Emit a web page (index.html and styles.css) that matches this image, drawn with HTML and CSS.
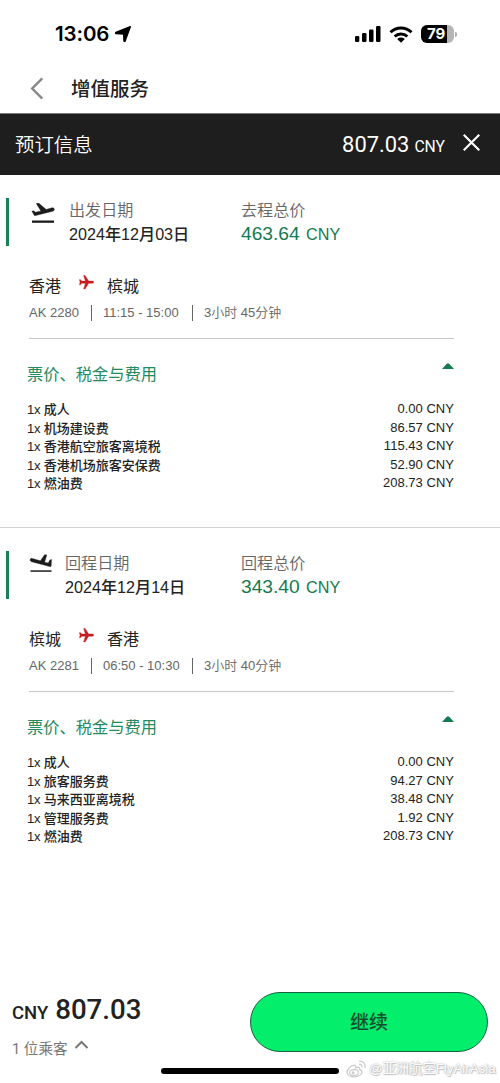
FILE: index.html
```html
<!DOCTYPE html>
<html lang="zh-CN">
<head>
<meta charset="utf-8">
<title>增值服务</title>
<link rel="stylesheet" href="styles.css">
</head>
<body>
<svg class="defs" width="0" height="0">
  <symbol id="plane" viewBox="0 0 24 24"><path d="M21 16v-2l-8-5V3.500c0-.83-.67-1.500-1.500-1.500S10 2.670 10 3.500V9l-8 5v2l8-2.500V19l-2 1.500V22l3.500-1 3.500 1v-1.500L13 19v-5.500l8 2.500z"/></symbol>
</svg>
<div class="screen">
  <div class="status">
    <span class="time">13:06</span>
    <svg class="locate" viewBox="0 0 16 16"><path d="M15.300.7 10 15.200q-.6.700-1-.2L8.600 8 1 7.500q-1-.3-.1-1z" stroke="#000" stroke-width="1.400" stroke-linejoin="round"/></svg>
    <svg class="signal" viewBox="0 0 26 16"><rect y="10" width="4.300" height="6" rx="1.200"/><rect x="7" y="7" width="4.500" height="9" rx="1.200"/><rect x="14" y="3.500" width="4.500" height="12.500" rx="1.200"/><rect x="21" width="4.500" height="16" rx="1.200"/></svg>
    <svg class="wifi" viewBox="0 0 24 17"><g fill="none" stroke="#000" stroke-width="3"><path d="M1.500 6.300a15 15 0 0 1 21 0"/><path d="M5.700 10.500a9 9 0 0 1 12.600 0"/></g><path d="M8.200 13a5.600 5.600 0 0 1 7.600 0L12 16.800z"/></svg>
    <span class="battery">79</span><i class="battery-tip"></i>
  </div>
  <div class="nav">
    <svg class="back" viewBox="0 0 14 24"><path d="M12.500 1.500 2 12l10.500 10.500"/></svg>
    <h1>增值服务</h1>
  </div>
  <div class="summary">
    <span class="summary-title">预订信息</span>
    <span class="summary-total">807.03</span><span class="summary-unit">CNY</span>
    <svg class="close" viewBox="0 0 16 16"><path d="m.7.7 14.600 14.600M15.300.7.7 15.300"/></svg>
  </div>

  <section class="flight">
    <div class="heading">
      <svg class="trip" viewBox="0 0 24 22"><path d="M1 17.500h22v2.300H1z"/><path d="M23.300 6.100c-.3-1-1.300-1.500-2.200-1.300l-5.900 1.600L7.500 0 5.300.6l4.600 7.300-5.300 1.400-2.100-1.600-1.600.5 2.700 4.600 18.200-4.600c1.100-.3 1.700-1.200 1.500-2.100z" stroke="#1c1c1c" stroke-width=".4"/></svg>
      <div class="date"><p class="label">出发日期</p><p class="value">2024年12月03日</p></div>
      <div class="fare"><p class="label">去程总价</p><p class="price">463.64 <small>CNY</small></p></div>
    </div>
    <div class="route"><span>香港</span><svg viewBox="0 0 24 24"><use href="#plane"/></svg><span>槟城</span></div>
    <div class="info"><span class="code">AK 2280</span><span class="hours">11:15 - 15:00</span><span class="length">3小时 45分钟</span></div>
    <div class="fees">
      <div class="fees-head"><h2>票价、税金与费用</h2><svg viewBox="0 0 12 6"><path d="M0 6 4.800.8q1.200-1.200 2.400 0L12 6z"/></svg></div>
      <ul>
        <li><span><i>1x</i> 成人</span><b>0.00 CNY</b></li>
        <li><span><i>1x</i> 机场建设费</span><b>86.57 CNY</b></li>
        <li><span><i>1x</i> 香港航空旅客离境税</span><b>115.43 CNY</b></li>
        <li><span><i>1x</i> 香港机场旅客安保费</span><b>52.90 CNY</b></li>
        <li><span><i>1x</i> 燃油费</span><b>208.73 CNY</b></li>
      </ul>
    </div>
  </section>

  <section class="flight return">
    <div class="heading">
      <svg class="trip" viewBox="0 0 24 22"><path d="M1.500 16.300h21v1.500h-21z"/><path d="M1.200 5.300c.3-.9 1.200-1.100 2-.9l8.200 2.400L15.600.8l2.200.1-2.200 7.300 3.700.8 1.500-2.900 1.700-.6-.3 6.300q-.1 1-1.300.8L2.500 7.700c-1-.3-1.600-1.500-1.300-2.400z" stroke="#1c1c1c" stroke-width=".4"/></svg>
      <div class="date"><p class="label">回程日期</p><p class="value">2024年12月14日</p></div>
      <div class="fare"><p class="label">回程总价</p><p class="price">343.40 <small>CNY</small></p></div>
    </div>
    <div class="route"><span>槟城</span><svg viewBox="0 0 24 24"><use href="#plane"/></svg><span>香港</span></div>
    <div class="info"><span class="code">AK 2281</span><span class="hours">06:50 - 10:30</span><span class="length">3小时 40分钟</span></div>
    <div class="fees">
      <div class="fees-head"><h2>票价、税金与费用</h2><svg viewBox="0 0 12 6"><path d="M0 6 4.800.8q1.200-1.200 2.400 0L12 6z"/></svg></div>
      <ul>
        <li><span><i>1x</i> 成人</span><b>0.00 CNY</b></li>
        <li><span><i>1x</i> 旅客服务费</span><b>94.27 CNY</b></li>
        <li><span><i>1x</i> 马来西亚离境税</span><b>38.48 CNY</b></li>
        <li><span><i>1x</i> 管理服务费</span><b>1.92 CNY</b></li>
        <li><span><i>1x</i> 燃油费</span><b>208.73 CNY</b></li>
      </ul>
    </div>
  </section>

  <footer>
    <div class="checkout">
      <div class="total">
        <p class="sum"><small>CNY</small> 807.03</p>
        <p class="guests">1 位乘客<svg viewBox="0 0 14 9"><path d="m1 8 6-6 6 6"/></svg></p>
      </div>
      <button>继续</button>
    </div>
    <div class="bottom">
      <i class="home"></i>
      <svg class="weibo" viewBox="0 0 20 18"><g fill="none" stroke="#cecece" stroke-width="1.300"><path d="M8 5.200C5 5.500 1 9.500 1 12.300c0 2.800 3.300 4.500 7.300 4.500 4.500 0 7.700-2.500 7.700-4.800 0-1.600-1.300-2.200-2.500-2.500.7-2.300-.8-2.900-4-1.700.5-1.700.2-2.700-1.500-2.600z"/><ellipse cx="8" cy="12.500" rx="4.500" ry="3"/><path d="M13 4.300c2-.3 3.500 1.200 3 3.200M13 1.200c4-.5 6.800 2.600 6 6.600"/></g><circle cx="7.200" cy="12.800" r="1.500" fill="#cecece"/></svg>
      <span class="credit">@亚洲航空FlyAirAsia</span>
    </div>
  </footer>
</div>
</body>
</html>
```

FILE: styles.css
```css
* { box-sizing: border-box; margin: 0; padding: 0; }
body { background: #fff; color: #222; font-family: "Liberation Sans", "Noto Sans CJK SC", sans-serif; }
i, b { font-style: normal; font-weight: 400; }
svg { display: block; flex: none; }
.defs { display: none; }
.screen { display: flex; flex-direction: column; width: 500px; height: 1083px; overflow: hidden; white-space: nowrap; }

.status { display: flex; align-items: center; height: 65px; padding: 3px 43px 0 55px; }
.time { width: 55px; font: 600 20.500px/24px Inter, sans-serif; letter-spacing: -.1px; color: #000; }
.locate { width: 16px; height: 16px; margin-left: 5px; }
.signal { width: 26px; height: 16px; margin-left: auto; }
.wifi { width: 24px; height: 17px; margin-left: 8px; }
.battery { width: 33px; height: 18px; margin-left: 8px; padding-left: 6px; border-radius: 6px; background: linear-gradient(90deg, #000 79%, #b5b5b5 79%); color: #fff; font: 700 15px/18px Inter, sans-serif; letter-spacing: -.2px; }
.battery-tip { width: 2px; height: 5px; margin-left: 1px; border-radius: 0 2px 2px 0; background: #aaa; }

.nav { display: flex; align-items: center; height: 48px; padding: 0 0 2px 30px; }
.back { width: 14px; height: 23px; margin-right: 27px; fill: none; stroke: #888; stroke-width: 2.500; }
h1 { padding-top: 1px; font-size: 19.500px; font-weight: 500; line-height: 28px; }
.summary { display: flex; align-items: center; height: 62px; padding: 0 20px 0 15px; background: #1e1e1e; border-top: 1px solid #777; color: #fff; }
.summary-title { flex: 1; padding-top: 1px; font-size: 19.400px; font-weight: 350; line-height: 28px; }
.summary-total { font: 400 21.900px/26px Roboto, sans-serif; }
.summary-unit { margin: 4px 18px 0 5px; font: 400 15.700px/20px Roboto, sans-serif; }
.close { width: 17px; height: 17px; margin-bottom: 4px; fill: none; stroke: #fff; stroke-width: 2; }

.flight { height: 353px; padding: 23px 46px 0 6px; border-bottom: 1px solid #d2d2d2; }
.return { border-bottom: 0; }
.heading { display: flex; height: 48px; border-left: 3px solid #168153; }
.trip { width: 24px; height: 22px; margin: 5px 0 0 22px; fill: #1c1c1c; }
.date { width: 172px; margin-left: 14px; }
.return .trip { margin-left: 20px; margin-top: 3px; }
.return .date { width: 176px; margin-left: 12px; }
.label { font-size: 16.100px; line-height: 25px; font-weight: 350; color: #666; }
.value { font-size: 16.150px; line-height: 22px; font-weight: 500; color: #222; }
.price { color: #147a50; font-size: 19.200px; line-height: 22px; }
.price small { margin-left: 1px; font-size: 16.200px; }
.route { display: flex; align-items: center; height: 28px; margin: 25px 0 0 23px; font-size: 16px; }
.route svg { width: 17px; height: 17px; margin: 0 12px 6px 17px; fill: #c51d20; stroke: #c51d20; stroke-width: .6; transform: rotate(90deg); }
.info { display: flex; align-items: center; height: 16px; margin: 5px 0 0 23px; padding-top: 1px; color: #666; font-size: 13px; line-height: 16px; font-weight: 350; }
.code { width: 62px; }
.hours { width: 101px; padding-left: 11px; border-left: 1px solid #666; }
.length { padding-left: 11px; border-left: 1px solid #666; }
.fees { margin: 18px 0 0 23px; border-top: 1px solid #c8c8c8; }
.fees-head { display: flex; justify-content: space-between; height: 61px; padding-top: 23px; }
h2 { margin-left: -2px; color: #238a62; font-size: 16.250px; line-height: 24px; font-weight: 400; }
.fees-head svg { width: 12px; height: 6px; margin-top: 1px; fill: #147a50; }
ul { list-style: none; }
li { display: flex; justify-content: space-between; height: 18.600px; margin-left: -2px; font-size: 13px; line-height: 19px; font-weight: 500; }
li b { margin-top: -1px; letter-spacing: .03px; }
li span i { letter-spacing: -.3px; }

footer { margin-top: auto; height: 91px; }
.checkout { display: flex; justify-content: space-between; height: 60px; padding: 0 12px; }
.sum { margin-top: 2px; font: 500 27.700px/32px Roboto, sans-serif; color: #222; }
.sum small { font-size: 18.500px; }
.guests { display: flex; margin-top: 8px; color: #777; font-size: 14.600px; line-height: 24px; font-weight: 400; font-family: Roboto, "Noto Sans CJK SC", sans-serif; }
.guests svg { width: 15px; height: 9px; margin: 3px 0 0 6px; fill: none; stroke: #777; stroke-width: 2; }
button { width: 238px; height: 60px; padding-bottom: 2px; border: 1px solid #176044; border-radius: 30px; background: #02ee6b; color: #124c30; font: 500 19px/28px "Noto Sans CJK SC", sans-serif; }
.bottom { display: flex; padding-left: 161px; height: 24px; }
.home { width: 178px; height: 6px; margin-top: 16px; border-radius: 3px; background: #000; }
.weibo { width: 20px; height: 18px; margin: 8px 3px 0 7px; }
.credit { margin-top: 7px; color: #fff; font-size: 13.300px; line-height: 20px; text-shadow: 0 0 1px #bbb, 0 0 2px #bbb, 1px 1px 1px #c4c4c4; }
```
